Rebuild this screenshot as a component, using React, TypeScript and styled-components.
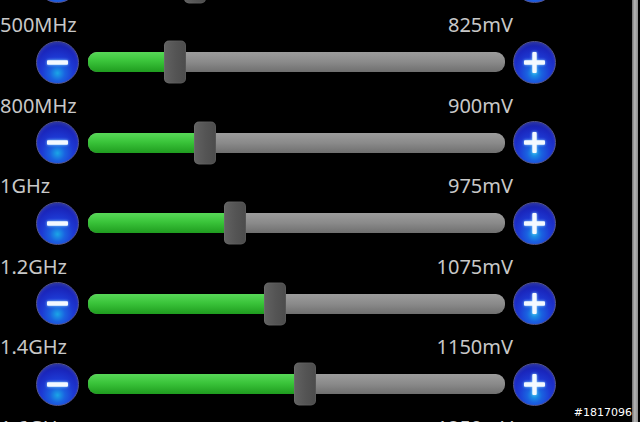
import styled, { createGlobalStyle } from "styled-components";

const GlobalStyle = createGlobalStyle`
  html, body {
    margin: 0;
    padding: 0;
    background: #000;
    overflow: hidden;
  }
`;

interface IStep {
  freq: string;
  mv: number;
}

// thumb position on the track follows the voltage (0.4px per mV)
const TRACK_WIDTH = 417;
const thumbCenter = (mv: number) => 87 + (mv - 825) * 0.4;

const steps: IStep[] = [
  { freq: "400MHz", mv: 875 },
  { freq: "500MHz", mv: 825 },
  { freq: "800MHz", mv: 900 },
  { freq: "1GHz", mv: 975 },
  { freq: "1.2GHz", mv: 1075 },
  { freq: "1.4GHz", mv: 1150 },
  { freq: "1.6GHz", mv: 1250 },
];

function Sign({ plus }: { plus?: boolean }) {
  return (
    <svg width="43" height="43" viewBox="0 0 43 43">
      <rect x="10.5" y="19.2" width="22" height="4.6" rx="1" fill="#f4f9ff" />
      {plus && <rect x="19.2" y="10.5" width="4.6" height="22" rx="1" fill="#f4f9ff" />}
    </svg>
  );
}

export default function App() {
  return (
    <Screen>
      <GlobalStyle />
      <List>
        {steps.map((item, index) => {
          const center = thumbCenter(item.mv);
          return (
            <Row key={index}>
              <LabelLine>
                <span>{item.freq}</span>
                <span>{item.mv}mV</span>
              </LabelLine>
              <Controls>
                <RoundButton aria-label="decrease">
                  <Sign />
                </RoundButton>
                <Track>
                  <Fill style={{ width: `${(center / TRACK_WIDTH) * 100}%` }} />
                  <Thumb style={{ left: `${center - 11}px` }} />
                </Track>
                <RoundButton aria-label="increase">
                  <Sign plus />
                </RoundButton>
              </Controls>
            </Row>
          );
        })}
      </List>
      <ScrollBar />
      <Watermark>#1817096</Watermark>
    </Screen>
  );
}

const Screen = styled.div`
  position: relative;
  display: flex;
  align-items: flex-start;
  width: 640px;
  height: 422px;
  overflow: hidden;
  background: #000;
`;

const List = styled.div`
  flex: 0 0 632px;
  display: flex;
  flex-direction: column;
  margin-top: -70.5px;
`;

const Row = styled.div`
  display: flex;
  flex-direction: column;
  margin-bottom: 6.5px;
`;

const LabelLine = styled.div`
  display: flex;
  justify-content: space-between;
  width: 513px;
  height: 30px;
  line-height: 30px;
  font-family: "Noto Sans", "Open Sans", sans-serif;
  font-size: 20px;
  color: #c8c8c8;
  white-space: nowrap;
`;

const Controls = styled.div`
  display: flex;
  align-items: center;
  height: 44px;
  padding-left: 36px;
  gap: 9px;

  & > button:last-child {
    margin-left: -1px;
  }
`;

const RoundButton = styled.button`
  flex: 0 0 43px;
  width: 43px;
  height: 43px;
  padding: 0;
  border-radius: 50%;
  border: 1.5px solid #55578f;
  background: radial-gradient(
    circle at 50% 76%,
    #1aa6e6 0%,
    #1a62e0 20%,
    #1d3ad4 42%,
    #1a26bc 68%,
    #0f1878 100%
  );
  box-shadow: inset 0 2px 3px rgba(255, 255, 255, 0.1);
  display: flex;
  align-items: center;
  justify-content: center;
  cursor: pointer;

  svg {
    display: block;
    filter: drop-shadow(0 0 1.5px #8ad4ff);
  }
`;

const Track = styled.div`
  position: relative;
  flex: 0 0 ${TRACK_WIDTH}px;
  height: 20px;
  border-radius: 9px;
  background: linear-gradient(to bottom, #9c9c9c 0%, #8a8a8a 50%, #6f6f6f 100%);
`;

const Fill = styled.div`
  position: absolute;
  left: 0;
  top: 0;
  bottom: 0;
  border-radius: 9px 0 0 9px;
  background: linear-gradient(to bottom, #58d858 0%, #3ac43a 45%, #1f9c1f 100%);
`;

const Thumb = styled.div`
  position: absolute;
  top: 50%;
  width: 22px;
  height: 43px;
  transform: translateY(-50%);
  border-radius: 5px;
  background: linear-gradient(to right, #626262 0%, #555555 50%, #4c4c4c 100%);
  box-shadow: inset 0 0 0 1px rgba(255, 255, 255, 0.06);
`;

const ScrollBar = styled.div`
  flex: 0 0 6px;
  align-self: stretch;
  background: linear-gradient(to right, #6c6c6c 0%, #b4b4b4 45%, #8c8c8c 100%);
`;

const Watermark = styled.div`
  position: absolute;
  right: 8px;
  bottom: 3px;
  font-family: "DejaVu Sans", sans-serif;
  font-size: 11px;
  line-height: 13px;
  color: #ffffff;
`;
